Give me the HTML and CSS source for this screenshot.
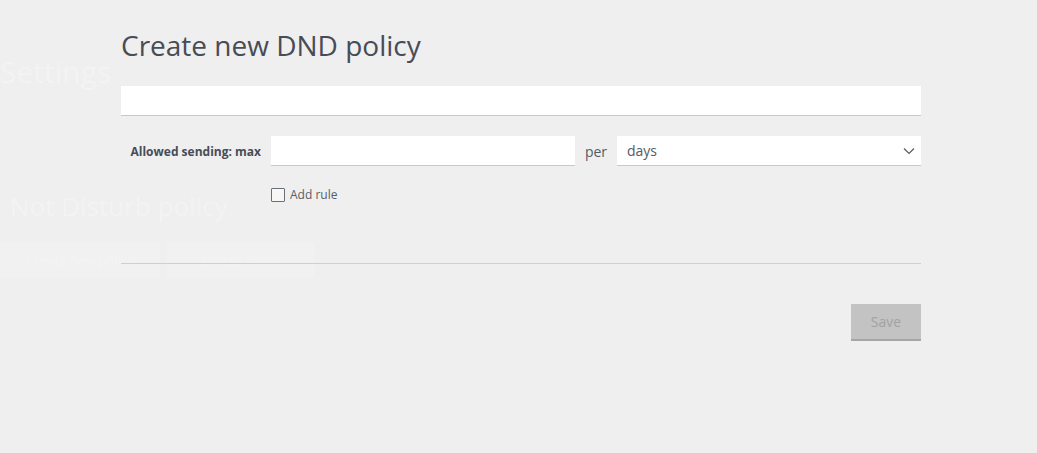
FILE: index.html
```html
<!DOCTYPE html>
<html lang="en">
<head>
<meta charset="utf-8">
<title>Create new DND policy</title>
<link rel="stylesheet" href="styles.css">
</head>
<body>
<div class="ghost">
  <div class="ghost-title">Settings</div>
  <div class="ghost-sub">Not Disturb policy</div>
  <div class="ghost-buttons">
    <span class="ghost-btn">Create new policy</span>
    <span class="ghost-btn">Delete policy</span>
  </div>
</div>
<div class="modal">
  <h1 class="title">Create new DND policy</h1>
  <div class="name-field"></div>
  <div class="row">
    <label class="label">Allowed sending: max</label>
    <div class="field"></div>
    <span class="per">per</span>
    <div class="field select">
      <span>days</span>
      <svg class="chev" width="12" height="8" viewBox="0 0 12 8"><path d="M1 1.5 L6 6.5 L11 1.5" fill="none" stroke="#555a63" stroke-width="1.2"/></svg>
    </div>
  </div>
  <div class="check-row">
    <span class="box"></span>
    <span class="check-label">Add rule</span>
  </div>
  <div class="divider"></div>
  <div class="actions">
    <button class="save">Save</button>
  </div>
</div>
</body>
</html>
```
FILE: styles.css
```css
* { box-sizing: border-box; }
html, body { margin: 0; padding: 0; }
body {
  background: #efefef;
  width: 1037px;
  height: 453px;
  overflow: hidden;
  font-family: "Open Sans", "Noto Sans", sans-serif;
  position: relative;
}
.ghost {
  padding-top: 52px;
  color: #f3f3f3;
}
.ghost-title {
  font-size: 30px;
  line-height: 40px;
}
.ghost-sub {
  font-size: 26px;
  line-height: 36px;
  margin-top: 96px;
  margin-left: 10px;
}
.ghost-buttons {
  display: flex;
  gap: 7px;
  margin-top: 18px;
}
.ghost-btn {
  display: block;
  background: #f1f1f1;
  color: #f4f4f4;
  width: 148px;
  height: 36px;
  line-height: 36px;
  font-size: 13px;
  text-align: center;
}
.ghost-btn:first-child { width: 160px; }
.modal {
  position: absolute;
  left: 121px;
  top: 0;
  width: 800px;
}
.title {
  margin: 0;
  padding-top: 25px;
  font-size: 28px;
  line-height: 40px;
  font-weight: 400;
  color: #474c57;
}
.name-field {
  margin-top: 21px;
  height: 30px;
  background: #fff;
  border-bottom: 1px solid #c8c8c8;
}
.row {
  display: flex;
  align-items: center;
  margin-top: 20px;
}
.label {
  width: 150px;
  padding-right: 10px;
  text-align: right;
  font-size: 12px;
  font-weight: 700;
  color: #474c57;
}
.field {
  width: 304px;
  height: 30px;
  background: #fff;
  border-bottom: 1px solid #c8c8c8;
}
.per {
  width: 42px;
  text-align: center;
  font-size: 14px;
  color: #555a63;
}
.select {
  display: flex;
  align-items: center;
  justify-content: space-between;
  padding: 0 6px 0 10px;
  font-size: 14px;
  color: #555a63;
}
.chev { display: block; }
.check-row {
  display: flex;
  align-items: center;
  margin-top: 20px;
  margin-left: 150px;
}
.box {
  width: 14px;
  height: 14px;
  border: 1px solid #6b6f76;
  background: #f7f7f7;
  border-radius: 1px;
}
.check-label {
  margin-left: 5px;
  font-size: 12px;
  color: #5a5e66;
}
.divider {
  margin-top: 60px;
  height: 1px;
  background: #cfcfcf;
}
.actions {
  display: flex;
  justify-content: flex-end;
  margin-top: 40px;
}
.save {
  width: 70px;
  height: 37px;
  border: 0;
  border-bottom: 2px solid #a6a6a6;
  background: #c3c3c3;
  color: #a2a2a2;
  font-family: "Open Sans", "Noto Sans", sans-serif;
  font-size: 14px;
  padding: 0;
}
```
